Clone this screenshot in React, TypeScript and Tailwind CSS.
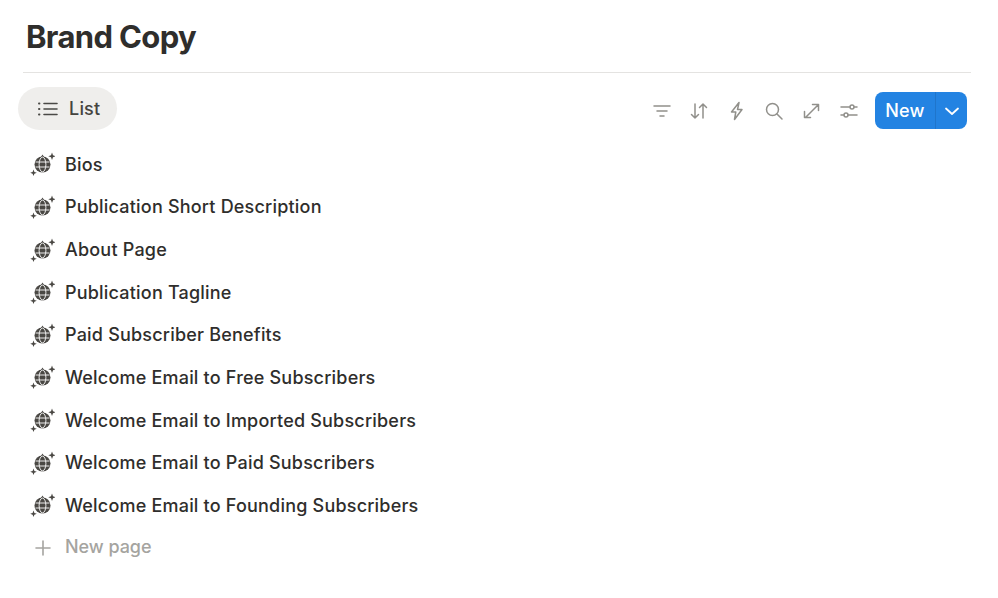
import React from 'react';

const pages = [
  'Bios',
  'Publication Short Description',
  'About Page',
  'Publication Tagline',
  'Paid Subscriber Benefits',
  'Welcome Email to Free Subscribers',
  'Welcome Email to Imported Subscribers',
  'Welcome Email to Paid Subscribers',
  'Welcome Email to Founding Subscribers',
];

const DiscoIcon = () => (
  <svg width="26" height="26" viewBox="0 0 26 26" className="shrink-0 text-[#4a4844]">
    <path d="M13.5 3.6 l1.9 2.8 h-3.8z" fill="currentColor" />
    <circle cx="13.5" cy="13.5" r="8" fill="currentColor" />
    <g stroke="#fff" strokeWidth="0.9" fill="none">
      <ellipse cx="13.5" cy="13.5" rx="3.4" ry="7.4" />
      <path d="M6.5 11h14M6.5 16h14" />
    </g>
    <path d="M23 1.5l1 2.7 2.7 1-2.7 1-1 2.7-1-2.7-2.7-1 2.7-1z" fill="currentColor" />
    <path d="M4.5 18.5l.9 2.4 2.4.9-2.4.9-.9 2.4-.9-2.4-2.4-.9 2.4-.9z" fill="currentColor" />
  </svg>
);

const ToolIcon = ({ children }: { children: React.ReactNode }) => (
  <svg width="20" height="20" viewBox="0 0 20 20" fill="none" stroke="#91908b" strokeWidth="1.5" strokeLinecap="round" strokeLinejoin="round">
    {children}
  </svg>
);

export default function App() {
  return (
    <div className="w-[998px] h-[598px] bg-white overflow-hidden font-['Inter',sans-serif] text-[#2f2e2c]">
      <div className="ml-[23px] w-[948px] h-[73px] border-b border-[#e4e3e1] pl-[3px] pt-[16px]">
        <h1 className="text-[31px] leading-[42px] font-bold tracking-[-0.65px]">Brand Copy</h1>
      </div>

      <div className="flex items-center justify-between mt-[14px] ml-[18px] w-[949px] h-[43px]">
        <div className="flex items-center gap-[11px] h-[43px] w-[99px] pl-[20px] rounded-full bg-[#efeeec]">
          <svg width="20" height="16" viewBox="0 0 20 16" fill="none" stroke="#4a4946" strokeWidth="1.6" strokeLinecap="round">
            <path d="M6 2.5h13M6 8h13M6 13.5h13" />
            <path d="M1 2.5h.4M1 8h.4M1 13.5h.4" strokeWidth="2" />
          </svg>
          <span className="text-[18px] font-[450] tracking-[0.2px] text-[#45443f]">List</span>
        </div>

        <div className="flex items-center pt-[4px]">
          <div className="flex items-center gap-[17.5px] mr-[16px]">
            <ToolIcon><path d="M2 5h16M5 10h10M8 15h4" /></ToolIcon>
            <ToolIcon><path d="M6 3v14M2.5 13.5L6 17l3.5-3.5M14 17V3M10.5 6.5L14 3l3.5 3.5" /></ToolIcon>
            <ToolIcon><path d="M12 1.5L4.5 11h4.3l-1.3 7.5 7.5-10h-4.5z" /></ToolIcon>
            <ToolIcon><circle cx="8.5" cy="8.5" r="6" /><path d="M13 13l5 5" /></ToolIcon>
            <ToolIcon><path d="M3.5 16.5L16 4M10.5 3.5h6v6M2.5 10.5v6h6" /></ToolIcon>
            <ToolIcon>
              <path d="M2 6h9M15 6h3M2 14h3M9 14h9" />
              <circle cx="13" cy="6" r="2" />
              <circle cx="7" cy="14" r="2" />
            </ToolIcon>
          </div>
          <div className="flex items-center h-[37px] w-[92px] rounded-[8px] bg-[#2383e2] text-white">
            <span className="w-[60px] text-center text-[18px] font-medium tracking-[0.2px]">New</span>
            <span className="w-px h-full bg-[#1f75cb]" />
            <span className="flex-1 flex items-center justify-center">
              <svg width="16" height="10" viewBox="0 0 16 10" fill="none" stroke="#fff" strokeWidth="1.8" strokeLinecap="round" strokeLinejoin="round">
                <path d="M2 2.5L8 8l6-5.5" />
              </svg>
            </span>
          </div>
        </div>
      </div>

      <ul className="mt-[13px] ml-[29px]">
        {pages.map((title) => (
          <li key={title} className="flex items-center gap-[10px] h-[42.625px] text-[18px] font-[450] tracking-[0.2px]">
            <DiscoIcon />
            <span>{title}</span>
          </li>
        ))}
        <li className="flex items-center h-[40px] text-[18px] font-[450] tracking-[-0.05px] text-[#a5a4a0]">
          <svg width="26" height="26" viewBox="0 0 26 26" fill="none" stroke="#a5a4a0" strokeWidth="1.6" strokeLinecap="round" className="shrink-0">
            <path d="M14 7v14M7 14h14" />
          </svg>
          <span className="ml-[10px]">New page</span>
        </li>
      </ul>
    </div>
  );
}
